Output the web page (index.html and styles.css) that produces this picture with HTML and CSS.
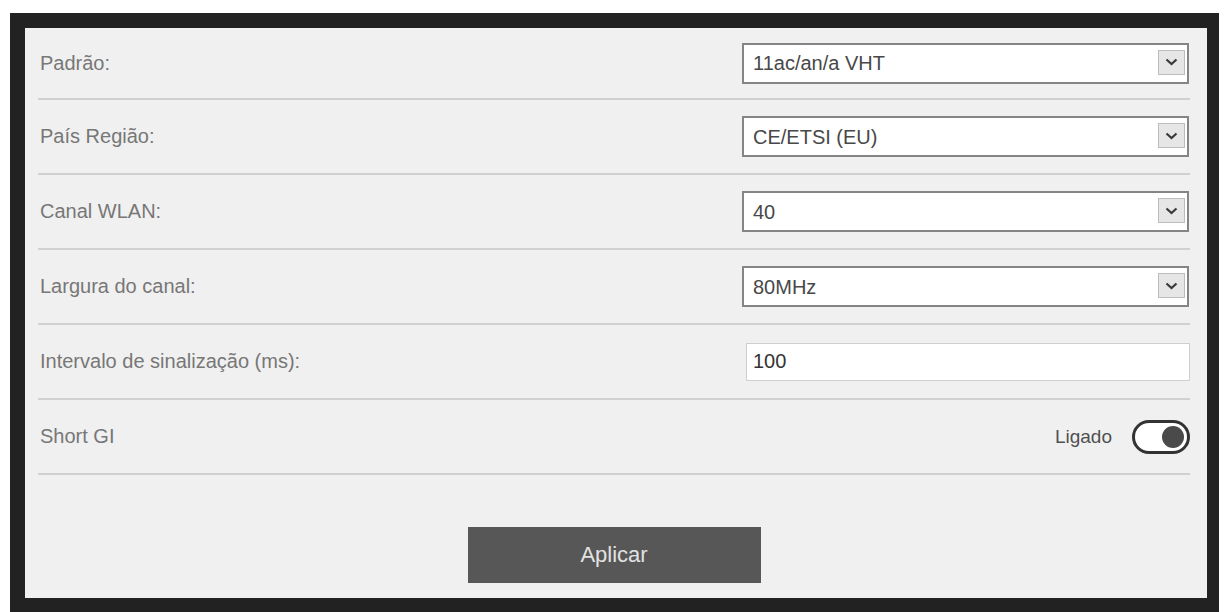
FILE: index.html
```html
<!DOCTYPE html>
<html lang="pt">
<head>
    <meta charset="UTF-8">
    <meta name="viewport" content="width=device-width, initial-scale=1.0">
    <title>Configurações WLAN</title>
    <link rel="stylesheet" href="styles.css">
</head>
<body>
<div class="frame">
    <div class="panel">
        <div class="row first">
            <label class="label" for="padrao">Padrão:</label>
            <div class="select">
                <select id="padrao">
                    <option>11ac/an/a VHT</option>
                </select>
                <span class="arrow">
                    <svg width="13" height="8" viewBox="0 0 13 8"><path d="M1.5 1.5 L6.5 6 L11.5 1.5" fill="none" stroke="#3a3a3a" stroke-width="2.2"/></svg>
                </span>
            </div>
        </div>

        <div class="row">
            <label class="label" for="regiao">País Região:</label>
            <div class="select">
                <select id="regiao">
                    <option>CE/ETSI (EU)</option>
                </select>
                <span class="arrow">
                    <svg width="13" height="8" viewBox="0 0 13 8"><path d="M1.5 1.5 L6.5 6 L11.5 1.5" fill="none" stroke="#3a3a3a" stroke-width="2.2"/></svg>
                </span>
            </div>
        </div>

        <div class="row">
            <label class="label" for="canal">Canal WLAN:</label>
            <div class="select">
                <select id="canal">
                    <option>40</option>
                </select>
                <span class="arrow">
                    <svg width="13" height="8" viewBox="0 0 13 8"><path d="M1.5 1.5 L6.5 6 L11.5 1.5" fill="none" stroke="#3a3a3a" stroke-width="2.2"/></svg>
                </span>
            </div>
        </div>

        <div class="row">
            <label class="label" for="largura">Largura do canal:</label>
            <div class="select">
                <select id="largura">
                    <option>80MHz</option>
                </select>
                <span class="arrow">
                    <svg width="13" height="8" viewBox="0 0 13 8"><path d="M1.5 1.5 L6.5 6 L11.5 1.5" fill="none" stroke="#3a3a3a" stroke-width="2.2"/></svg>
                </span>
            </div>
        </div>

        <div class="row">
            <label class="label" for="intervalo">Intervalo de sinalização (ms):</label>
            <input class="text-input" id="intervalo" type="text" value="100">
        </div>

        <div class="row">
            <span class="label">Short GI</span>
            <div class="switch-wrap">
                <span class="switch-text">Ligado</span>
                <span class="switch on"><span class="knob"></span></span>
            </div>
        </div>

        <div class="actions">
            <button class="apply">Aplicar</button>
        </div>
    </div>
</div>
</body>
</html>
```

FILE: styles.css
```css
html, body {
    margin: 0;
    height: 100%;
    overflow: hidden;
    background-color: #fff;
    font-family: "Liberation Sans", Arial, sans-serif;
}

.frame {
    margin: 13px 10px 0 10px;
    border: 15px solid #222;
    border-right-width: 12px;
}

.panel {
    height: 570px;
    background-color: #f0f0f0;
    padding: 0 17px 0 13px;
    display: flex;
    flex-direction: column;
}

.row {
    height: 75px;
    flex-shrink: 0;
    box-sizing: border-box;
    border-bottom: 2px solid #d0d0d0;
    display: flex;
    align-items: center;
    justify-content: space-between;
    padding-left: 2px;
}

.row.first {
    height: 72px;
}

.label {
    font-size: 20px;
    color: #777;
}

/* dropdowns */
.select {
    position: relative;
    width: 447px;
    height: 41px;
    margin-right: 1px;
}

.select select {
    appearance: none;
    -webkit-appearance: none;
    width: 100%;
    height: 100%;
    box-sizing: border-box;
    border: 2px solid #858585;
    border-radius: 0;
    background-color: #fff;
    padding: 0 40px 0 9px;
    font-family: inherit;
    font-size: 20px;
    color: #484848;
    outline: none;
}

.arrow {
    position: absolute;
    right: 4px;
    top: 7px;
    width: 27px;
    height: 25px;
    box-sizing: border-box;
    background-color: #e6e6e6;
    border: 1px solid #bdbdbd;
    display: flex;
    align-items: center;
    justify-content: center;
    pointer-events: none;
}

.text-input {
    width: 444px;
    height: 38px;
    box-sizing: border-box;
    border: 1px solid #cfcfcf;
    background-color: #fff;
    padding: 0 6px;
    font-family: inherit;
    font-size: 20px;
    color: #333;
    outline: none;
}

/* on/off switch */
.switch-wrap {
    display: flex;
    align-items: center;
    gap: 20px;
}

.switch-text {
    font-size: 19px;
    color: #505050;
}

.switch {
    width: 58px;
    height: 34px;
    box-sizing: border-box;
    border: 3px solid #333;
    border-radius: 17px;
    background-color: #fff;
    display: flex;
    align-items: center;
    padding: 0 3px;
}

.switch.on {
    justify-content: flex-end;
}

.knob {
    width: 22px;
    height: 22px;
    border-radius: 50%;
    background-color: #4a4a4a;
}

.actions {
    flex: 1;
    display: flex;
    justify-content: center;
    padding-top: 52px;
}

.apply {
    width: 293px;
    height: 56px;
    border: none;
    background-color: #575757;
    color: #e2e2e2;
    font-family: inherit;
    font-size: 22px;
    cursor: pointer;
}

.apply:hover {
    background-color: #444;
}
```
